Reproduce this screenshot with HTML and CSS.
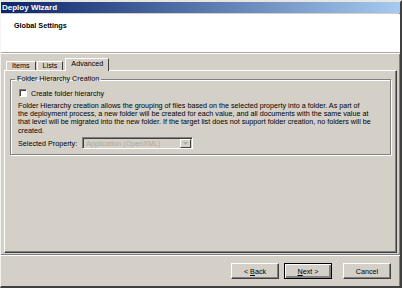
FILE: index.html
```html
<!DOCTYPE html>
<html>
<head>
<meta charset="utf-8">
<link rel="stylesheet" href="styles.css">
</head>
<body>
<div class="window">
  <div class="titlebar">Deploy Wizard</div>
  <div class="header">Global Settings</div>
  <div class="body">
    <div class="tabs">
      <div class="tab">Items</div>
      <div class="tab">Lists</div>
      <div class="tab active">Advanced</div>
    </div>
    <div class="panel">
      <fieldset class="group">
        <legend>Folder Hierarchy Creation</legend>
        <label class="check"><span class="box"></span>Create folder hierarchy</label>
        <p class="desc">Folder Hierarchy creation allows the grouping of files based on the selected property into a folder. As part of<br>the deployment process, a new folder will be created for each value, and all documents with the same value at<br>that level will be migrated into the new folder. If the target list does not support folder creation, no folders will be<br>created.</p>
        <div class="prop">
          <span>Selected Property:</span>
          <div class="combo"><span class="val">Application (OpenXML)</span><span class="drop"><svg width="5" height="3" viewBox="0 0 5 3"><path d="M0 0h5L2.5 3z" fill="#aca899"/></svg></span></div>
        </div>
      </fieldset>
    </div>
  </div>
  <div class="footer">
    <button class="btn">&lt; <u>B</u>ack</button>
    <button class="btn default"><u>N</u>ext &gt;</button>
    <button class="btn cancel">Cancel</button>
  </div>
</div>
</body>
</html>
```
FILE: styles.css
```css
html, body { margin: 0; padding: 0; }
body { width: 402px; height: 288px; overflow: hidden; background: #d4d0c8; font-family: "Liberation Sans", Arial, sans-serif; font-size: 7.2px; color: #000; }
.window { box-sizing: border-box; width: 402px; height: 288px; border-top: 2px solid #e8e6e0; border-left: 1px solid #f4f3ef; border-right: 2px solid #404040; border-bottom: 2px solid #404040; box-shadow: inset -1px 0 0 #808080; display: flex; flex-direction: column; background: #d4d0c8; }
.titlebar { height: 11px; line-height: 11px; padding-left: 1px; background: linear-gradient(to right, #0a246a, #a6caf0); color: #fff; font-weight: bold; font-size: 8px; }
.header { height: 39px; box-sizing: border-box; background: #fff; margin-top: 1px; padding: 8px 0 0 13px; line-height: 8px; font-weight: bold; font-size: 7.2px; border-bottom: 1px solid #aca899; }
.body { border-top: 1px solid #fff; padding: 4px 0 0 3px; display: flex; flex-direction: column; }
.tabs { display: flex; align-items: flex-end; height: 12px; padding-left: 2px; }
.tab { height: 9px; box-sizing: border-box; border: 1px solid #fff; border-right-color: #404040; border-bottom: none; padding: 0 5px; line-height: 8px; margin-right: 1px; background: #d4d0c8; }
.tab.active { height: 13px; padding: 0 5px; line-height: 9px; margin-bottom: -1px; position: relative; z-index: 1; margin-left: 1px; }
.panel { width: 393px; height: 183px; box-sizing: border-box; border: 1px solid #fff; border-right-color: #404040; border-bottom-color: #404040; box-shadow: inset -1px -1px 0 #808080; padding: 4px 5px 0 5px; }
.group { margin: 0; border: 1px solid #808080; box-shadow: 1px 1px 0 #fff, inset 1px 1px 0 #fff; padding: 0 3px 5px 7px; }
.group legend { padding: 0 2px; margin-left: -3px; line-height: 8px; }
.check { display: flex; align-items: center; gap: 4px; margin-top: 6px; height: 8px; padding-left: 1px; }
.box { width: 8px; height: 8px; box-sizing: border-box; background: #fff; border: 1px solid #808080; border-right-color: #fff; border-bottom-color: #fff; box-shadow: inset 1px 1px 0 #404040; }
.desc { margin: 4.5px 0 0 0; line-height: 8.4px; white-space: nowrap; }
.prop { display: flex; align-items: center; gap: 5px; margin-top: 2px; }
.combo { width: 111px; height: 12px; box-sizing: border-box; border: 1px solid #808080; border-right-color: #fff; border-bottom-color: #fff; box-shadow: inset 1px 1px 0 #404040; display: flex; align-items: center; padding: 0 1px 0 3px; }
.combo .val { color: #aca899; flex: 1; }
.drop { width: 11px; height: 9px; box-sizing: border-box; border: 1px solid #fff; border-right-color: #404040; border-bottom-color: #404040; display: flex; align-items: center; justify-content: center; }
.footer { display: flex; justify-content: flex-end; align-items: flex-start; padding: 8px 9px 0 0; margin-top: 1px; border-top: 1px solid #808080; box-shadow: inset 0 1px 0 #fff; flex: 1; }
.btn { width: 48px; height: 16px; box-sizing: border-box; font: 7.2px "Liberation Sans", Arial, sans-serif; color: #000; background: #d4d0c8; border: 1px solid #fff; border-right-color: #404040; border-bottom-color: #404040; box-shadow: inset -1px -1px 0 #808080; padding: 0; margin-left: 5px; }
.btn.default { border: 1px solid #000; box-shadow: inset 1px 1px 0 #fff, inset -2px -2px 0 #808080; }
.btn.cancel { margin-left: 11px; }
```
